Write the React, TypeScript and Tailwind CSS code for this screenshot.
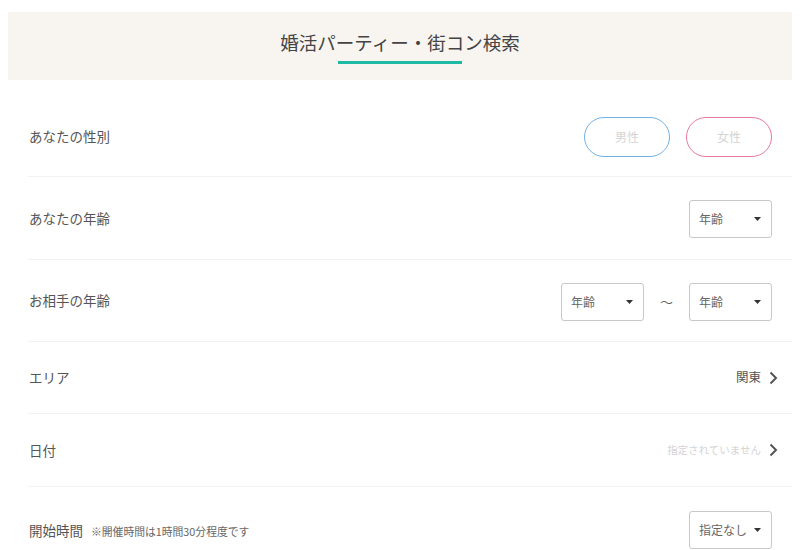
import React from 'react';

const font = { fontFamily: '"Noto Sans CJK JP", "Noto Sans", sans-serif' };

const Caret = () => (
  <svg width="7" height="4" viewBox="0 0 7 4" className="shrink-0">
    <path d="M0 0 L7 0 L3.5 4 Z" fill="#333" />
  </svg>
);

const Select: React.FC<{ label: string }> = ({ label }) => (
  <div className="mt-[2px] flex h-[38px] w-[83px] items-center justify-between rounded-[3px] border border-[#c8c8c8] bg-white pl-[9px] pr-[10px]">
    <span className="text-[12px] text-[#666]">{label}</span>
    <Caret />
  </div>
);

const Chevron = () => (
  <svg width="9" height="14" viewBox="0 0 9 14" className="ml-[8px] shrink-0">
    <path d="M1.5 1.5 L7 7 L1.5 12.5" fill="none" stroke="#555" strokeWidth="2" />
  </svg>
);

const Row: React.FC<{ h: string; pr?: string; children: React.ReactNode; last?: boolean }> = ({ h, pr = 'pr-[20px]', children, last }) => (
  <div className={`flex items-center justify-between pl-[1px] ${pr} ${h} ${last ? '' : 'border-b border-[#f2f2f2]'}`}>
    {children}
  </div>
);

const Label: React.FC<{ children: React.ReactNode }> = ({ children }) => (
  <span className="text-[13.5px] text-[#555]">{children}</span>
);

export default function App() {
  return (
    <div className="h-[550px] w-[800px] overflow-hidden bg-white" style={font}>
      {/* Header */}
      <div className="mx-[8px] mt-[12px] flex h-[68px] flex-col items-center justify-center bg-[#f8f5f1]">
        <h1 className="mt-[1px] text-[18.5px] leading-[26px] font-normal text-[#444]">
          婚活パーティー・街コン検索
        </h1>
        <div className="mt-[6px] h-[3px] w-[124px] bg-[#20b9a3]" />
      </div>

      {/* Form rows */}
      <div className="ml-[28px] mr-[8px] mt-[17px]">
        <Row h="h-[80px]">
          <Label>あなたの性別</Label>
          <div className="flex gap-[16px]">
            <div className="flex h-[40px] w-[86px] items-center justify-center rounded-full border-[1.5px] border-[#72b1e6] text-[12px] text-[#d4d4d4]">
              男性
            </div>
            <div className="flex h-[40px] w-[86px] items-center justify-center rounded-full border-[1.5px] border-[#ea77a0] text-[12px] text-[#d4d4d4]">
              女性
            </div>
          </div>
        </Row>
        <Row h="h-[83px]">
          <Label>あなたの年齢</Label>
          <Select label="年齢" />
        </Row>
        <Row h="h-[82px]">
          <Label>お相手の年齢</Label>
          <div className="flex items-center">
            <Select label="年齢" />
            <span className="mx-[16px] mt-[2px] text-[13px] text-[#666]">〜</span>
            <Select label="年齢" />
          </div>
        </Row>
        <Row h="h-[72px]" pr="pr-[14px]">
          <Label>エリア</Label>
          <div className="flex items-center">
            <span className="text-[12.5px] text-[#555]">関東</span>
            <Chevron />
          </div>
        </Row>
        <Row h="h-[73px]" pr="pr-[14px]">
          <Label>日付</Label>
          <div className="flex items-center">
            <span className="text-[10.5px] text-[#d4d4d4]">指定されていません</span>
            <Chevron />
          </div>
        </Row>
        <Row h="h-[86px]" last>
          <div className="flex items-baseline">
            <Label>開始時間</Label>
            <span className="ml-[8px] text-[10.8px] text-[#666]">※開催時間は1時間30分程度です</span>
          </div>
          <div className="-mt-[2px]">
            <Select label="指定なし" />
          </div>
        </Row>
      </div>
    </div>
  );
}
